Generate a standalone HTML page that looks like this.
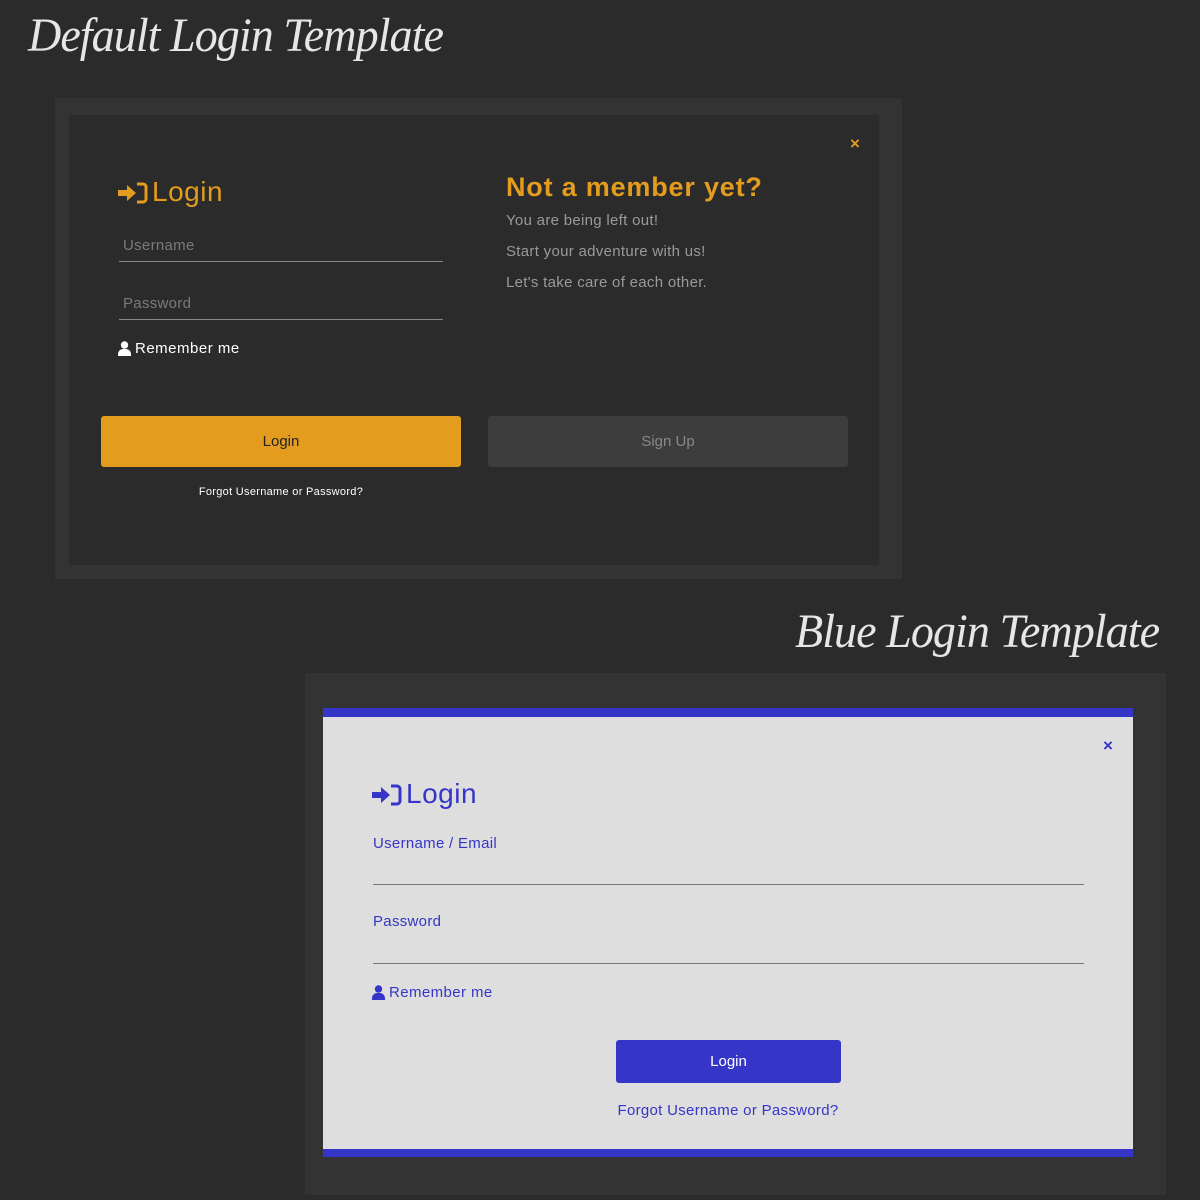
<!DOCTYPE html>
<html><head><style>
body{margin:0;width:1200px;height:1200px;background:#2b2b2b;position:relative;overflow:hidden;font-family:"Liberation Sans",sans-serif}
.a{position:absolute}
.title{font-family:"Liberation Serif",serif;font-style:italic;color:#e6e6e6;font-size:48px;letter-spacing:-1px;white-space:nowrap;transform:scaleX(0.96);transform-origin:left}
</style></head><body>
<div class="a title" style="left:28px;top:8px">Default Login Template</div>
<div class="a" style="left:55px;top:98px;width:847px;height:481px;background:#333"></div>
<div class="a" style="left:69px;top:115px;width:810px;height:450px;background:#2b2b2b"></div>
<div class="a" style="left:850px;top:134px;color:#e39c1e;font-size:17px;font-weight:bold">×</div>
<svg class="a" style="left:118px;top:182px" width="30" height="22" viewBox="0 0 30 22"><path d="M0 8h9V3l9 8-9 8v-5H0z" fill="#e39c1e"/><path d="M19 2h6a3 3 0 0 1 3 3v12a3 3 0 0 1-3 3h-6" stroke="#e39c1e" stroke-width="3" fill="none"/></svg>
<div class="a" style="left:152px;top:176px;color:#e39c1e;font-size:28px;letter-spacing:0.5px">Login</div>
<div class="a" style="left:123px;top:237px;color:#7a7a7a;font-size:15px;letter-spacing:0.3px">Username</div>
<div class="a" style="left:119px;top:261px;width:324px;height:1px;background:#888"></div>
<div class="a" style="left:123px;top:295px;color:#7a7a7a;font-size:15px;letter-spacing:0.3px">Password</div>
<div class="a" style="left:119px;top:319px;width:324px;height:1px;background:#888"></div>
<svg class="a" style="left:118px;top:341px" width="13" height="15" viewBox="0 0 13 15"><circle cx="6.5" cy="4" r="3.7" fill="#fff"/><path d="M0 15v-2a5 5 0 0 1 5-5h3a5 5 0 0 1 5 5v2z" fill="#fff"/></svg>
<div class="a" style="left:135px;top:340px;color:#fff;font-size:15px;letter-spacing:0.5px">Remember me</div>
<div class="a" style="left:506px;top:172px;color:#e39c1e;font-size:27px;font-weight:bold;letter-spacing:0.8px">Not a member yet?</div>
<div class="a" style="left:506px;top:205px;color:#9a9a9a;font-size:15px;line-height:31px;letter-spacing:0.3px">You are being left out!<br>Start your adventure with us!<br>Let's take care of each other.</div>
<div class="a" style="left:101px;top:416px;width:360px;height:51px;background:#e39c1e;border-radius:3px;text-align:center;line-height:51px;font-size:15px;color:#222">Login</div>
<div class="a" style="left:488px;top:416px;width:360px;height:51px;background:#3d3d3d;border-radius:3px;text-align:center;line-height:51px;font-size:15px;color:#888">Sign Up</div>
<div class="a" style="left:101px;top:486px;width:360px;text-align:center;color:#fff;font-size:11px;letter-spacing:0.3px">Forgot Username or Password?</div>

<div class="a title" style="left:795px;top:604px">Blue Login Template</div>
<div class="a" style="left:305px;top:673px;width:861px;height:522px;background:#333"></div>
<div class="a" style="left:323px;top:708px;width:810px;height:449px;background:#dedede;border-top:9px solid #3535c8;border-bottom:8px solid #3535c8;box-sizing:border-box"></div>
<div class="a" style="left:1103px;top:736px;color:#3535c8;font-size:17px;font-weight:bold">×</div>
<svg class="a" style="left:372px;top:784px" width="30" height="22" viewBox="0 0 30 22"><path d="M0 8h9V3l9 8-9 8v-5H0z" fill="#3535c8"/><path d="M19 2h6a3 3 0 0 1 3 3v12a3 3 0 0 1-3 3h-6" stroke="#3535c8" stroke-width="3" fill="none"/></svg>
<div class="a" style="left:406px;top:778px;color:#3535c8;font-size:28px;letter-spacing:0.5px">Login</div>
<div class="a" style="left:373px;top:835px;color:#3535c8;font-size:15px;letter-spacing:0.3px">Username / Email</div>
<div class="a" style="left:373px;top:884px;width:711px;height:1px;background:#777"></div>
<div class="a" style="left:373px;top:913px;color:#3535c8;font-size:15px;letter-spacing:0.3px">Password</div>
<div class="a" style="left:373px;top:963px;width:711px;height:1px;background:#777"></div>
<svg class="a" style="left:372px;top:985px" width="13" height="15" viewBox="0 0 13 15"><circle cx="6.5" cy="4" r="3.7" fill="#3535c8"/><path d="M0 15v-2a5 5 0 0 1 5-5h3a5 5 0 0 1 5 5v2z" fill="#3535c8"/></svg>
<div class="a" style="left:389px;top:984px;color:#3535c8;font-size:15px;letter-spacing:0.4px">Remember me</div>
<div class="a" style="left:616px;top:1040px;width:225px;height:43px;background:#3535c8;border-radius:3px;text-align:center;line-height:43px;font-size:15px;color:#fff">Login</div>
<div class="a" style="left:578px;top:1102px;width:300px;text-align:center;color:#3535c8;font-size:15px;letter-spacing:0.3px">Forgot Username or Password?</div>
</body></html>
